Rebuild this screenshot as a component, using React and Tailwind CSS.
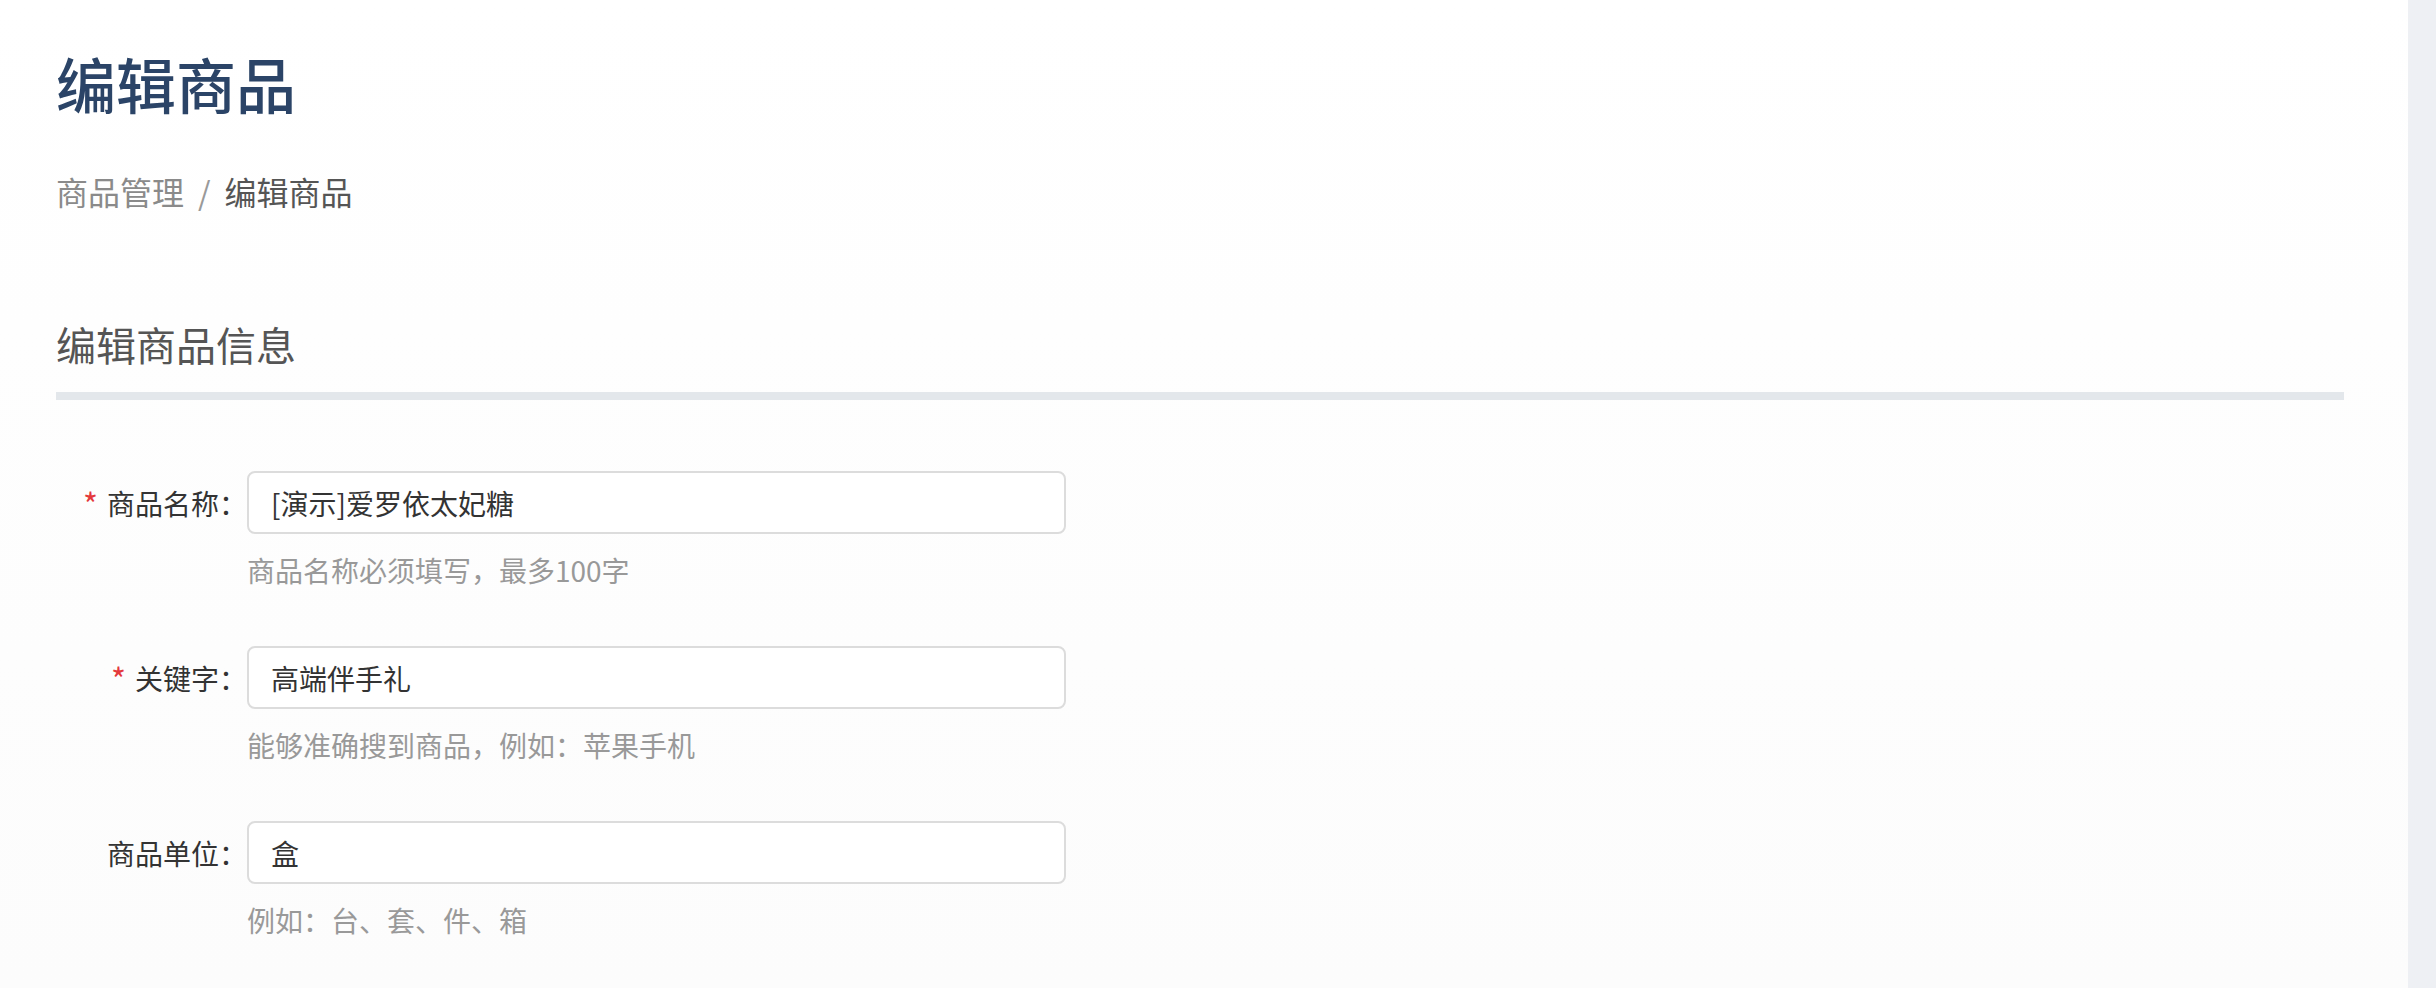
import React from "react";

const font = "font-['Noto_Sans_CJK_SC','Noto_Sans',sans-serif]";

function Row({ label, required, value, help }) {
  return (
    <div className="flex flex-col">
      <div className="flex items-center">
        <div className="flex w-[191px] shrink-0 items-center justify-end text-[28px] leading-[40px] text-[#333]">
          {required && <span className="mr-[9px] text-[32px] leading-[40px] text-[#e4393c]">*</span>}
          <span>{label}：</span>
        </div>
        <div className="flex h-[63px] w-[819px] items-center rounded-[8px] border-2 border-[#dcdcdc] bg-white pl-[22px]">
          <span className="text-[28px] leading-[40px] text-[#333]">{value}</span>
        </div>
      </div>
      <div className="ml-[191px] mt-[16px] text-[28px] leading-[40px] text-[#999]">{help}</div>
    </div>
  );
}

export default function App() {
  return (
    <div className={`flex h-[988px] w-[2436px] overflow-hidden ${font}`}>
      <div className="flex-1 bg-gradient-to-b from-white to-[#fcfcfc] pl-[56px] pr-[64px] pt-[53px]">
        <h1 className="text-[60px] font-medium leading-[60px] text-[#2b4467]">编辑商品</h1>
        <div className="mt-[62px] flex items-center text-[32px] leading-[32px]">
          <span className="text-[#8a8a8a]">商品管理</span>
          <span className="mx-[14px] text-[#999]">/</span>
          <span className="text-[#555]">编辑商品</span>
        </div>
        <h2 className="mt-[117px] text-[40px] leading-[40px] text-[#555]">编辑商品信息</h2>
        <div className="mt-[28px] h-[8px] bg-[#e3e7eb]" />
        <div className="mt-[71px] flex flex-col gap-[56px]">
          <Row label="商品名称" required value="[演示]爱罗依太妃糖" help="商品名称必须填写，最多100字" />
          <Row label="关键字" required value="高端伴手礼" help="能够准确搜到商品，例如：苹果手机" />
          <Row label="商品单位" value="盒" help="例如：台、套、件、箱" />
        </div>
      </div>
      <div className="w-[28px] shrink-0 bg-[#eef0f4]" />
    </div>
  );
}
